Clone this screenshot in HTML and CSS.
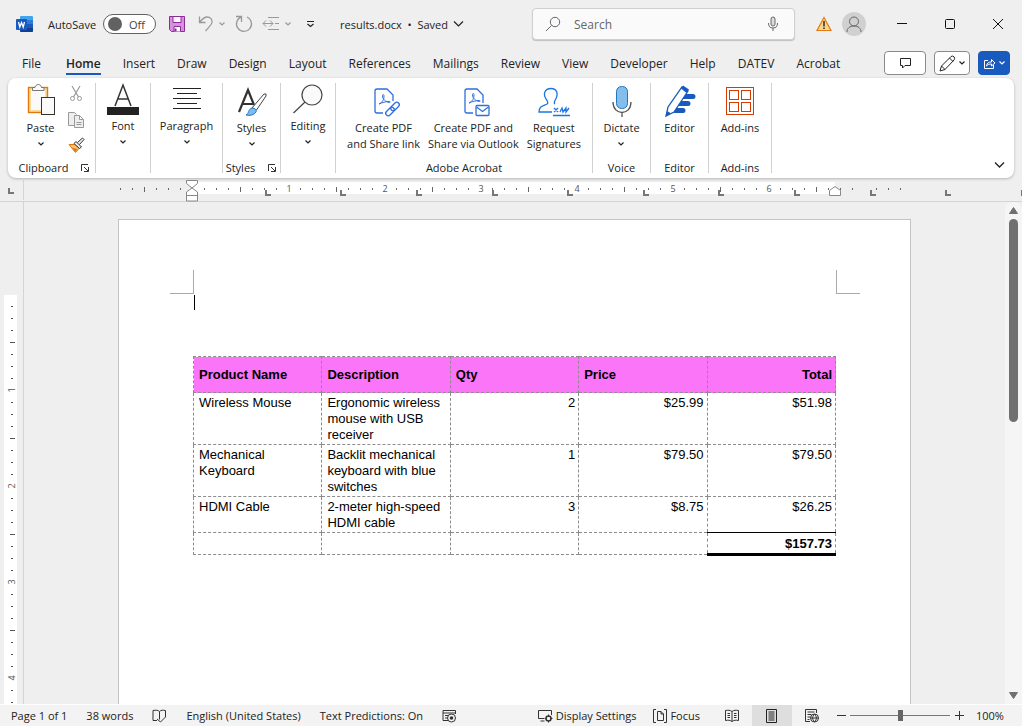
FILE: index.html
```
<!DOCTYPE html>
<html lang="en">
  <head>
    <meta charset="utf-8" />
    <title>results.docx - Word</title>
    <meta name="viewport" content="width=device-width, initial-scale=1" />
    <link rel="stylesheet" href="styles.css">
  </head>
  <body>
    <svg class="defs" width="0" height="0" aria-hidden="true">
      <symbol id="chevron" viewBox="0 0 8 8"><path d="M1.5 2.5 4 5l2.500-2.500" fill="none" stroke="currentColor" stroke-width="1.2" /></symbol>
      <symbol id="launcher" viewBox="0 0 10 10"><path d="M1.500 8V1.500H8M4 4l4 4M8.500 4v4.500H4" fill="none" stroke="#333" /></symbol>
    </svg>

    <header class="titlebar">
      <div class="quick">
        <svg class="logo" width="17" height="17" viewBox="0 0 17 17">
          <rect x="4" width="13" height="16" rx="1" fill="#41a5ee" />
          <path d="M4 4h13v4H4z" fill="#2b7cd3" />
          <path d="M4 8h13v4H4z" fill="#185abd" />
          <path d="M4 12h13v3q0 1-1 1H5q-1 0-1-1z" fill="#103f91" />
          <rect y="3" width="11" height="11" rx="1" fill="#185abd" />
          <path d="m2.500 6 1.300 5 1.700-4.500L7.200 11l1.300-5" fill="none" stroke="#fff" stroke-width="1.300" />
        </svg>
        <label for="autosave">AutoSave</label>
        <label class="toggle"><input type="checkbox" id="autosave" /><span>Off</span></label>
        <button class="save" aria-label="Save">
          <svg width="16" height="16" viewBox="0 0 16 16">
            <path d="M.5.500h15v15H2.500l-2-2z" fill="#d592dc" stroke="#8e2a9b" />
            <path d="M4 .5h8v6H4zM5 15.500v-5h6.500v5" fill="#fff" stroke="#8e2a9b" />
            <path d="M5.500 12.500h2v3h-2z" fill="#8e2a9b" />
          </svg>
        </button>
        <button class="undo" aria-label="Undo">
          <svg width="16" height="18" viewBox="0 0 16 18"><path d="M1.500 1.500v6h6M1.500 7.500C4 4.500 6 2 9 2c3.500 0 5.500 2.500 5 5.500-.3 2-2 3.500-6.500 8.500" fill="none" stroke="#999" stroke-width="1.300" /></svg>
          <svg width="8" height="8"><use href="#chevron" /></svg>
        </button>
        <button class="redo" aria-label="Repeat">
          <svg width="18" height="18" viewBox="0 0 18 18"><path d="M1 1.500h5.500V7M6.500 1.800A7.500 7.500 0 1 0 12 2" fill="none" stroke="#999" stroke-width="1.300" /></svg>
        </button>
        <button class="indent" aria-label="Indent">
          <svg width="18" height="16" viewBox="0 0 18 16"><path d="M6 1.500h11M13 7.500h4M6 13.500h11M1 7.500h10M4 4.500l-3 3 3 3M8 4.500l3 3-3 3" fill="none" stroke="#999" /></svg>
          <svg width="8" height="8"><use href="#chevron" /></svg>
        </button>
        <button class="customize" aria-label="Customize Quick Access Toolbar">
          <svg width="9" height="8" viewBox="0 0 9 8"><path d="M1 1.500h7M1.500 4l3 2.500 3-2.500" fill="none" stroke="#222" stroke-width="1.200" /></svg>
        </button>
      </div>
      <button class="docname">results.docx &nbsp;•&nbsp; Saved
        <svg width="11" height="8" viewBox="0 0 11 8"><path d="m1 1.500 4.500 4.500L10 1.500" fill="none" stroke="#222" stroke-width="1.200" /></svg>
      </button>
      <div class="search">
        <svg width="16" height="16" viewBox="0 0 16 16"><circle cx="9" cy="6" r="4.700" fill="none" stroke="#666" /><path d="m5.500 9.500-5.500 5.500" stroke="#666" /></svg>
        <input type="text" placeholder="Search" aria-label="Search" />
        <svg width="12" height="16" viewBox="0 0 12 16"><rect x="4" y="1" width="4" height="9" rx="2" fill="#ddd" stroke="#666" /><path d="M1.500 7c0 3.500 1.500 5 4.500 5s4.500-1.500 4.500-5M6 12v3" fill="none" stroke="#666" /></svg>
      </div>
      <div class="window">
        <svg width="16" height="16" viewBox="0 0 16 16"><path d="M8 1.500 15 14.500H1z" fill="#fbd58a" stroke="#e27c12" stroke-width="1.200" /><path d="M8 5v5.500M8 11.500V13" stroke="#222" stroke-width="1.400" /></svg>
        <svg class="avatar" width="24" height="24" viewBox="0 0 24 24"><circle cx="12" cy="12" r="12" fill="#d0d0d0" /><circle cx="12" cy="9.500" r="4.500" fill="none" stroke="#666" /><path d="M5 20c0-4 3-6 7-6s7 2 7 6" fill="none" stroke="#666" /></svg>
        <button aria-label="Minimize"><svg width="12" height="12" viewBox="0 0 12 12"><path d="M1 5.500h10" stroke="#111" /></svg></button>
        <button aria-label="Maximize"><svg width="12" height="12" viewBox="0 0 12 12"><rect x="1.500" y="1.500" width="9" height="9" rx="1" fill="none" stroke="#111" /></svg></button>
        <button aria-label="Close"><svg width="12" height="12" viewBox="0 0 12 12"><path d="m1 1 10 10M11 1 1 11" stroke="#111" /></svg></button>
      </div>
    </header>

    <nav class="tabs">
      <a href="#">File</a>
      <a href="#" class="active">Home</a>
      <a href="#">Insert</a>
      <a href="#">Draw</a>
      <a href="#">Design</a>
      <a href="#">Layout</a>
      <a href="#">References</a>
      <a href="#">Mailings</a>
      <a href="#">Review</a>
      <a href="#">View</a>
      <a href="#">Developer</a>
      <a href="#">Help</a>
      <a href="#">DATEV</a>
      <a href="#">Acrobat</a>
      <div class="actions">
        <button class="comments" aria-label="Comments">
          <svg width="13" height="12" viewBox="0 0 13 12"><path d="M1.500 1.500h10v7H6L3.500 11V8.500h-2z" fill="none" stroke="#222" /></svg>
        </button>
        <button class="editing" aria-label="Editing mode">
          <svg width="17" height="17" viewBox="0 0 17 17"><path d="m1 16 1.500-5L12 1.500q1.500-1 3 .3 1.300 1.500.2 3L6 14.500zM10.500 3l3.500 3.500M2.500 11 6 14.500" fill="none" stroke="#222" /></svg>
          <svg width="8" height="8"><use href="#chevron" /></svg>
        </button>
        <button class="share" aria-label="Share">
          <svg width="13" height="13" viewBox="0 0 13 13"><path d="M5 3.500H1.500v8h9V8M3.500 9c.5-3 2-4 5-4V2.500L12 6 8.500 9V7C6 7 5 7.500 3.500 9z" fill="none" stroke="#fff" /></svg>
          <svg width="8" height="8"><use href="#chevron" /></svg>
        </button>
      </div>
    </nav>

    <section class="ribbon">
      <div class="group clipboard">
        <div class="tools">
          <button class="tool">
            <svg width="32" height="32" viewBox="0 0 32 32"><rect x="3.500" y="4.500" width="19" height="25" fill="#fbdc97" stroke="#e07a10" stroke-width="1.400" /><rect x="6" y="7" width="14" height="20" fill="#fafafa" /><path d="M7.500 7.500v-3H10c.5-4 6-4 6.500 0h2.500v3z" fill="#fafafa" stroke="#777" /><rect x="16.500" y="14.500" width="13" height="17" fill="#fafafa" stroke="#333" /></svg>
            <span>Paste</span>
            <svg width="8" height="8"><use href="#chevron" /></svg>
          </button>
          <div class="small-tools">
            <button aria-label="Cut"><svg width="16" height="17" viewBox="0 0 16 17"><path d="m4 1 6.500 11M12 1 5.500 12" stroke="#999" stroke-width="1.200" /><circle cx="4.500" cy="13.500" r="2" fill="none" stroke="#999" /><circle cx="11.500" cy="13.500" r="2" fill="none" stroke="#999" /></svg></button>
            <button aria-label="Copy"><svg width="16" height="16" viewBox="0 0 16 16"><path d="M6 13.500H.500V.500h6l2 2" fill="#eee" stroke="#999" /><path d="M6.500 3.500h5l4 4v8h-9zM11.500 3.500v4h4M8.500 10.500h5M8.500 12.500h5" fill="#eee" stroke="#999" /></svg></button>
            <button aria-label="Format Painter"><svg width="17" height="16" viewBox="0 0 17 16"><path d="m1 7.500 6 0 4 4-3.500 4z" fill="#fbc37a" stroke="#e07a10" /><path d="M3 10.500 9.500 12 7.500 15z" fill="#e07a10" /><path d="m6 6.500 2-2 5.500 5.500-2 1.500zM9.500 5.500 14.500 1l1.500 1.500-4.500 5" fill="#eee" stroke="#333" /></svg></button>
          </div>
        </div>
        <div class="caption">Clipboard <button aria-label="Clipboard options"><svg width="10" height="10"><use href="#launcher" /></svg></button></div>
      </div>

      <div class="group">
        <button class="tool compact">
          <svg width="32" height="32" viewBox="0 0 32 32"><path d="M8 23 16 2l8 21M11 16h10" fill="none" stroke="#333" stroke-width="1.500" /><path d="M0 24h32v8H0z" fill="#222" /></svg>
          <span>Font</span>
          <svg width="8" height="8"><use href="#chevron" /></svg>
        </button>
      </div>

      <div class="group">
        <button class="tool compact">
          <svg width="32" height="32" viewBox="0 0 32 32"><path d="M2 5.500h28M6 10.500h20M2 15.500h28M6 20.500h20M2 25.500h28" stroke="#222" /></svg>
          <span>Paragraph</span>
          <svg width="8" height="8"><use href="#chevron" /></svg>
        </button>
      </div>

      <div class="group">
        <button class="tool">
          <svg width="32" height="32" viewBox="0 0 32 32"><path d="M3 29 12 7l6 15M7 21h10" fill="none" stroke="#333" stroke-width="2.200" /><path d="m16 25 12-14 2 0 0 2-9.500 14z" fill="#fff" stroke="#444" /><path d="M10 32c3-1 2-6 6-7 3 0 5 2 4 4-2 3-6 4-10 3z" fill="#7cbdf0" stroke="#1f78c8" /></svg>
          <span>Styles</span>
          <svg width="8" height="8"><use href="#chevron" /></svg>
        </button>
        <div class="caption">Styles <button aria-label="Styles pane"><svg width="10" height="10"><use href="#launcher" /></svg></button></div>
      </div>

      <div class="group">
        <button class="tool compact">
          <svg width="32" height="32" viewBox="0 0 32 32"><circle cx="20" cy="12" r="10" fill="#fafafa" stroke="#444" stroke-width="1.200" /><path d="M13 19 1.500 30" stroke="#444" stroke-width="1.200" /></svg>
          <span>Editing</span>
          <svg width="8" height="8"><use href="#chevron" /></svg>
        </button>
      </div>

      <div class="group">
        <div class="tools">
          <button class="tool">
            <svg width="32" height="32" viewBox="0 0 32 32" fill="none" stroke="#2f6fdb" stroke-width="1.300"><path d="M15 30H9q-2 0-2-2V8q0-2 2-2h10l6 6v6" /><path d="M11 21c4-2 5-5 5-8 0-2-1.500-2-1.500 0 0 3 3 6 7 6.500 1 0 1-1 0-1-4 0-7 1-10.500 2.500z" stroke-width="1" /><rect x="22" y="21" width="10" height="5" rx="2.500" transform="rotate(-45 27 23.500)" /><rect x="17" y="26" width="10" height="5" rx="2.500" transform="rotate(-45 22 28.500)" /></svg>
            <span>Create PDF<br />and Share link</span>
          </button>
          <button class="tool">
            <svg width="32" height="32" viewBox="0 0 32 32" fill="none" stroke="#2f6fdb" stroke-width="1.300"><path d="M16 30H10q-2 0-2-2V8q0-2 2-2h10l6 6v8" /><path d="M12 20c4-2 5-5 5-8 0-2-1.500-2-1.500 0 0 3 3 6 7 6.500 1 0 1-1 0-1-4 0-7 1-10.500 2.500z" stroke-width="1" /><rect x="19" y="22.500" width="13" height="10" rx="1" /><path d="m19.500 24 6 4.500 6-4.500" /></svg>
            <span>Create PDF and<br />Share via Outlook</span>
          </button>
          <button class="tool">
            <svg width="32" height="32" viewBox="0 0 32 32" fill="none" stroke="#1b74e4" stroke-width="1.300"><path d="M14 29H1c0-6 4-6 8-8 1-.5 1-2 0-3.500C4 11 7 5.500 13 5.500s8 5.500 4 12c-1 2-1 3 0 3.500" /><path d="m16 25 4 4m0-4-4 4M22 29l2-4 1 4 3-4 0 4 3-4M15 32.500h17" /></svg>
            <span>Request<br />Signatures</span>
          </button>
        </div>
        <div class="caption">Adobe Acrobat</div>
      </div>

      <div class="group">
        <button class="tool">
          <svg width="32" height="32" viewBox="0 0 32 32"><rect x="11.500" y="3.500" width="11" height="22" rx="5" fill="#83beec" stroke="#1f78b8" /><path d="M8 19c0 14 18 14 18 0M17 29v5" fill="none" stroke="#555" stroke-width="1.300" /></svg>
          <span>Dictate</span>
          <svg width="8" height="8"><use href="#chevron" /></svg>
        </button>
        <div class="caption">Voice</div>
      </div>

      <div class="group">
        <button class="tool">
          <svg width="32" height="32" viewBox="0 0 32 32"><path d="M18 13.500h11M15 20.500h9M11 27.500h8" stroke="#185abd" stroke-width="5" stroke-linecap="round" /><path d="M2 33 4 24 18 4l6 4L10 29z" fill="#fff" stroke="#185abd" stroke-width="1.300" /><path d="m17 5.500 2-3 6 4-2.500 3.500zM2 33l1.500-5 3.500 2.500z" fill="#185abd" /></svg>
          <span>Editor</span>
        </button>
        <div class="caption">Editor</div>
      </div>

      <div class="group">
        <button class="tool">
          <svg width="32" height="32" viewBox="0 0 32 32" fill="none" stroke="#d83b01"><rect x="2.500" y="4.500" width="27" height="27" /><rect x="5.500" y="7.500" width="9" height="9" /><rect x="17.500" y="7.500" width="9" height="9" /><rect x="5.500" y="19.500" width="9" height="9" /><rect x="17.500" y="19.500" width="9" height="9" /></svg>
          <span>Add-ins</span>
        </button>
        <div class="caption">Add-ins</div>
      </div>

      <button class="collapse" aria-label="Collapse ribbon">
        <svg width="11" height="8" viewBox="0 0 11 8"><path d="m1 1.500 4.500 4.500L10 1.500" fill="none" stroke="#222" stroke-width="1.300" /></svg>
      </button>
    </section>

    <div class="ruler">
      <div class="corner"><svg width="6" height="6" viewBox="0 0 6 6"><path d="M1 0v5h5" fill="none" stroke="#777" stroke-width="2" /></svg></div>
      <!-- x=0 is the left edge of the sheet, one inch is 96 units -->
      <svg width="793" height="23" viewBox="0 0 793 23">
        <defs>
          <pattern id="ticks" x="74" width="96" height="23" patternUnits="userSpaceOnUse">
            <path d="M12.500 10v2M24.500 10v2M36.500 10v2M48.500 9v5M60.500 10v2M72.500 10v2M84.500 10v2" stroke="#666" />
          </pattern>
        </defs>
        <path d="M74 4h643v12H74z" fill="#fff" />
        <path d="M0 0h72v23H0zM76 0h708v23H76z" fill="url(#ticks)" />
        <g class="numbers">
          <text x="171" y="14">1</text><text x="267" y="14">2</text><text x="363" y="14">3</text>
          <text x="459" y="14">4</text><text x="555" y="14">5</text><text x="651" y="14">6</text>
        </g>
        <path d="M148 12v5h5M223 12v5h5M299 12v5h5M375 12v5h5M450 12v5h5M526 12v5h5M601 12v5h5M677 12v5h5M753 12v5h5M828 12v5h5M904 12v5h5" fill="none" stroke="#777" stroke-width="2" />
        <path d="M68.500 2.500h11v3l-5.500 4.500 5.500 4v9h-11v-9l5.500-4-5.500-4.500zM68.500 17.500h11M711.500 17.500v-5l5.500-4 5.500 4v5z" fill="#fff" stroke="#888" />
      </svg>
    </div>

    <main class="workspace">
      <div class="side-ruler">
        <svg width="24" height="503" viewBox="0 0 24 503">
          <defs>
            <pattern id="side-ticks" y="92" width="24" height="96" patternUnits="userSpaceOnUse">
              <path d="M11 12.500h2M11 24.500h2M11 36.500h2M10 48.500h5M11 60.500h2M11 72.500h2M11 84.500h2" stroke="#555" />
            </pattern>
          </defs>
          <path d="M4 93h13v410H4z" fill="#fff" />
          <path d="M4 96h13v407H4z" fill="url(#side-ticks)" />
          <g class="numbers">
            <text transform="translate(15 188) rotate(-90)">1</text>
            <text transform="translate(15 284) rotate(-90)">2</text>
            <text transform="translate(15 380) rotate(-90)">3</text>
            <text transform="translate(15 476) rotate(-90)">4</text>
          </g>
        </svg>
      </div>
      <div class="canvas">
        <article class="sheet">
          <div class="crop-marks"><i></i><i></i></div>
          <div class="text">
            <div class="caret"></div>
            <table>
              <thead>
                <tr><th>Product Name</th><th>Description</th><th>Qty</th><th>Price</th><th class="num">Total</th></tr>
              </thead>
              <tbody>
                <tr><td>Wireless Mouse</td><td>Ergonomic wireless mouse with USB receiver</td><td class="num">2</td><td class="num">$25.99</td><td class="num">$51.98</td></tr>
                <tr><td>Mechanical Keyboard</td><td>Backlit mechanical keyboard with blue switches</td><td class="num">1</td><td class="num">$79.50</td><td class="num">$79.50</td></tr>
                <tr><td>HDMI Cable</td><td>2-meter high-speed HDMI cable</td><td class="num">3</td><td class="num">$8.75</td><td class="num">$26.25</td></tr>
              </tbody>
              <tfoot>
                <tr><td></td><td></td><td></td><td></td><td class="num total">$157.73</td></tr>
              </tfoot>
            </table>
          </div>
        </article>
      </div>
      <div class="scrollbar">
        <svg width="9" height="7" viewBox="0 0 9 7"><path d="m4.500.500 4 6h-8z" fill="#707070" stroke="#707070" stroke-linejoin="round" /></svg>
        <div class="thumb"></div>
        <svg width="9" height="7" viewBox="0 0 9 7"><path d="m4.500 6.500 4-6h-8z" fill="#707070" stroke="#707070" stroke-linejoin="round" /></svg>
      </div>
    </main>

    <footer class="status">
      <div class="info">
        <span>Page 1 of 1</span>
        <span>38 words</span>
        <svg width="15" height="14" viewBox="0 0 15 14"><path d="M7.500 2.500C6 1 4 1 1 1.500v10h4M7.500 2.500C9 1 11 1 13.500 1.500V8M7.500 2.500v8M5 10l3.500 3 5-5" fill="none" stroke="#333" /></svg>
        <span>English (United States)</span>
        <span>Text Predictions: On</span>
        <svg width="15" height="14" viewBox="0 0 15 14"><path d="M7 11.500H1V1.500h12.500V5M1 4h12.500M3 6.500h4M3 9h3" fill="none" stroke="#333" /><circle cx="9.500" cy="9" r="4" fill="#f3f3f3" stroke="#333" /><circle cx="9.500" cy="9" r="1.800" fill="#333" /></svg>
      </div>
      <div class="view">
        <button class="display">
          <svg width="15" height="14" viewBox="0 0 15 14"><path d="M6 9.500H.500V1.500h13V6M2.500 12h4" fill="none" stroke="#333" /><circle cx="10.500" cy="9.500" r="2.500" fill="none" stroke="#333" stroke-width="1.500" /><path d="M10.500 5.500v2M10.500 11.500v2M6.500 9.500h2M12.500 9.500h2M8 7l1 1M12 11l1 1M13 7l-1 1M9 11l-1 1" stroke="#333" /></svg>Display Settings
        </button>
        <button class="focus">
          <svg width="14" height="14" viewBox="0 0 14 14"><path d="M3 .5H.500v13H3M11 .5h2.500v13H11M4.500 2.500H8L10.500 5v6.500h-6zM8 2.500V5h2.500" fill="none" stroke="#333" /></svg>Focus
        </button>
        <button class="mode" aria-label="Read Mode">
          <svg width="14" height="14" viewBox="0 0 14 14"><path d="M7 2.500C5 1 3 1 .500 1.500v10c2.500-.5 4.500-.5 6.500 1 2-1.500 4-1.500 6.500-1v-10C11 1 9 1 7 2.500zv10M2.500 4.500H5M2.500 6.500H5M2.500 8.500H5M9 4.500h2.500M9 6.500h2.500M9 8.500h2.500" fill="none" stroke="#333" /></svg>
        </button>
        <button class="mode selected" aria-label="Print Layout">
          <svg width="12" height="14" viewBox="0 0 12 14"><path d="M.5.500h10v13H.500zM2.500 3h6M2.500 5h6M2.500 7h6M2.500 9h6M2.500 11h6" fill="none" stroke="#222" /></svg>
        </button>
        <button class="mode" aria-label="Web Layout">
          <svg width="15" height="14" viewBox="0 0 15 14"><path d="M5 12.500H.500V.500h11V4M2.500 3h7M2.500 5.500h4M2.500 8h3M2.500 10.500h2" fill="none" stroke="#333" /><circle cx="9.500" cy="9" r="4" fill="#f3f3f3" stroke="#333" /><path d="M5.500 9h8M9.500 5c-2.500 3-2.500 5 0 8M9.500 5c2.500 3 2.500 5 0 8" fill="none" stroke="#333" /></svg>
        </button>
        <button class="step" aria-label="Zoom out"><svg width="9" height="9" viewBox="0 0 9 9"><path d="M0 4.500h9" stroke="#333" /></svg></button>
        <input type="range" min="0" max="200" value="100" aria-label="Zoom" />
        <button class="step" aria-label="Zoom in"><svg width="9" height="9" viewBox="0 0 9 9"><path d="M0 4.500h9M4.500 0v9" stroke="#333" /></svg></button>
        <span class="percent">100%</span>
      </div>
    </footer>
  </body>
</html>
```

FILE: styles.css
```
* {
  box-sizing: border-box;
}

body {
  margin: 0;
  height: 100vh;
  display: flex;
  flex-direction: column;
  overflow: hidden;
  background-color: #efefef;
  color: #222;
  font-family: 'Open Sans', 'Noto Sans', sans-serif;
  font-size: 11px;
}

svg {
  flex: none;
  overflow: visible;
}

.defs {
  position: absolute;
}

button {
  border: none;
  background: none;
  padding: 0;
  color: inherit;
  font: inherit;
  display: flex;
  align-items: center;
  justify-content: center;
}

/* title bar */
.titlebar {
  flex: none;
  height: 48px;
  display: grid;
  grid-template-columns: 340px 192px 263px 1fr;
  align-items: center;
}

.quick {
  display: flex;
  align-items: center;
  padding-left: 16px;
}

.logo {
  margin-right: 15px;
}

.quick > label:first-of-type {
  width: 55px;
  white-space: nowrap;
}

.toggle {
  display: flex;
  align-items: center;
  gap: 7px;
  width: 53px;
  height: 20px;
  padding-left: 4px;
  border: 1px solid #616161;
  border-radius: 10px;
  background-color: #fff;
  color: #444;
}

.toggle input {
  appearance: none;
  width: 14px;
  height: 14px;
  margin: 0;
  border-radius: 50%;
  background-color: #616161;
}

.undo,
.redo,
.indent {
  color: #999;
  gap: 4px;
}

.save {
  margin: 0 13px;
}

.undo,
.redo {
  margin-right: 9px;
}

.customize {
  margin-left: 14px;
}

.docname {
  justify-self: start;
  gap: 5px;
  white-space: nowrap;
}

.search {
  display: flex;
  align-items: center;
  height: 32px;
  padding: 0 15px 0 13px;
  background-color: #fafafa;
  border: 1px solid #d0d0d0;
  border-radius: 4px;
  box-shadow: 0 1px 1px rgba(0, 0, 0, 0.2);
}

.search input {
  flex: 1;
  min-width: 0;
  margin: 0 12px;
  padding: 0;
  border: none;
  outline: none;
  background: none;
  font: inherit;
  font-size: 12px;
}

.search input::placeholder {
  color: #666;
}

.window {
  display: flex;
  align-items: center;
  justify-content: flex-end;
}

.avatar {
  margin: 0 12px 0 10px;
}

.window button {
  width: 48px;
  height: 32px;
}

/* tabs */
.tabs {
  flex: none;
  height: 30px;
  display: flex;
  gap: 22px;
  padding: 0 12px 0 22px;
  font-size: 12px;
}

.tabs a {
  height: 27px;
  line-height: 32px;
  color: #222;
  text-decoration: none;
}

.tabs .active {
  margin-left: 3px;
  font-weight: 600;
  border-bottom: 2px solid #185abd;
}

.actions {
  display: flex;
  gap: 8px;
  margin-left: auto;
  padding-top: 3px;
}

.actions button {
  width: 36px;
  height: 24px;
  gap: 2px;
  border: 1px solid #8a8a8a;
  border-radius: 4px;
  background-color: #fff;
}

.actions .comments {
  width: 42px;
}

.actions .share {
  width: 32px;
  border-color: #185abd;
  background-color: #185abd;
  color: #fff;
}

/* ribbon */
.ribbon {
  flex: none;
  height: 100px;
  margin: 0 8px;
  display: grid;
  grid-template-columns: 88px 55px 72px 58px 55px 257px 58px 58px 63px 1fr;
  background-color: #fff;
  border-radius: 8px;
  box-shadow: 0 1px 3px rgba(0, 0, 0, 0.25);
}

.group {
  display: flex;
  flex-direction: column;
  align-items: center;
  justify-content: space-between;
  margin: 5px 0;
  border-right: 1px solid #d0d0d0;
}

.tools {
  display: flex;
  align-items: flex-start;
  gap: 8px;
}

.clipboard {
  padding-left: 6px;
}

.clipboard .tools {
  gap: 11px;
}

.tool {
  flex-direction: column;
  line-height: 16px;
  white-space: nowrap;
}

.tool span {
  margin: 5px 0 4px;
}

.compact span {
  margin: 3px 0 4px;
}

.small-tools {
  display: flex;
  flex-direction: column;
  justify-content: space-between;
  height: 70px;
  padding-top: 2px;
}

.caption {
  display: flex;
  align-items: center;
  gap: 12px;
  line-height: 10px;
}

.collapse {
  align-self: end;
  justify-self: end;
  margin: 0 9px 9px;
}

/* rulers */
.ruler {
  flex: none;
  height: 24px;
  display: grid;
  grid-template-columns: 24px 1fr 17px;
  justify-items: center;
  border-bottom: 1px solid #d4d4d4;
}

.corner {
  width: 24px;
  height: 22px;
  padding: 10px 0 0 8px;
  border-right: 1px solid #d4d4d4;
}

.corner svg {
  display: block;
}

.numbers {
  fill: #555;
  font-size: 9px;
  text-anchor: middle;
}

.side-ruler {
  border-right: 1px solid #d4d4d4;
}

/* document */
.workspace {
  flex: 1;
  min-height: 0;
  display: grid;
  grid-template-columns: 24px 1fr 17px;
  overflow: hidden;
}

.side-ruler,
.canvas {
  min-height: 0;
  overflow: hidden;
}

.sheet {
  width: 793px;
  min-height: 1123px;
  margin: 17px auto 0;
  padding: 50px 50px 0 51px;
  background-color: #fff;
  border: 1px solid #c4c4c4;
  color: #000;
  font-family: 'Liberation Sans', Arial, sans-serif;
  font-size: 13px;
  line-height: 16px;
}

.crop-marks {
  display: flex;
  justify-content: space-between;
}

.crop-marks i {
  width: 24px;
  height: 24px;
  border: solid #aaa;
  border-width: 0 1px 1px 0;
}

.crop-marks i:last-child {
  border-width: 0 0 1px 1px;
}

.text {
  padding: 0 24px 0 23px;
}

.caret {
  width: 1px;
  height: 15px;
  margin: 1px 1px 46px;
  background-color: #000;
}

table {
  width: 100%;
  table-layout: fixed;
  border-collapse: collapse;
}

th,
td {
  padding: 2px 3px 1px 5px;
  border: 1px dashed #8c8c8c;
  text-align: left;
  vertical-align: top;
}

th {
  height: 36px;
  background-color: #fa75f8;
  vertical-align: middle;
}

tfoot td {
  height: 22px;
  padding-top: 3px;
}

.num {
  text-align: right;
}

.total {
  border-top: 1px solid #000;
  border-bottom: 3px solid #000;
  font-weight: bold;
}

.scrollbar {
  display: flex;
  flex-direction: column;
  align-items: center;
  padding: 5px 0;
  border-radius: 8px 8px 0 0;
  background-color: #f5f5f5;
}

.thumb {
  width: 9px;
  height: 203px;
  margin: 5px 0 auto;
  border-radius: 5px;
  background-color: #707070;
}

/* status bar */
.status {
  flex: none;
  height: 22px;
  display: flex;
  justify-content: space-between;
  background-color: #f3f3f3;
  border-top: 1px solid #fff;
  white-space: nowrap;
}

.info,
.view {
  display: flex;
  align-items: center;
}

.info {
  gap: 19px;
  padding-left: 11px;
}

.display,
.focus {
  gap: 3px;
  margin-right: 17px;
}

.focus {
  margin-right: 12px;
}

.mode {
  width: 40px;
  height: 21px;
}

.selected {
  background-color: #dedede;
}

.step {
  width: 18px;
}

.view input {
  appearance: none;
  width: 100px;
  height: 11px;
  margin: 0;
  background: linear-gradient(#777, #777) center / 100% 1px no-repeat;
}

.view input::-webkit-slider-thumb {
  appearance: none;
  width: 5px;
  height: 11px;
  background-color: #666;
}

.percent {
  width: 54px;
  padding-left: 8px;
}
```
